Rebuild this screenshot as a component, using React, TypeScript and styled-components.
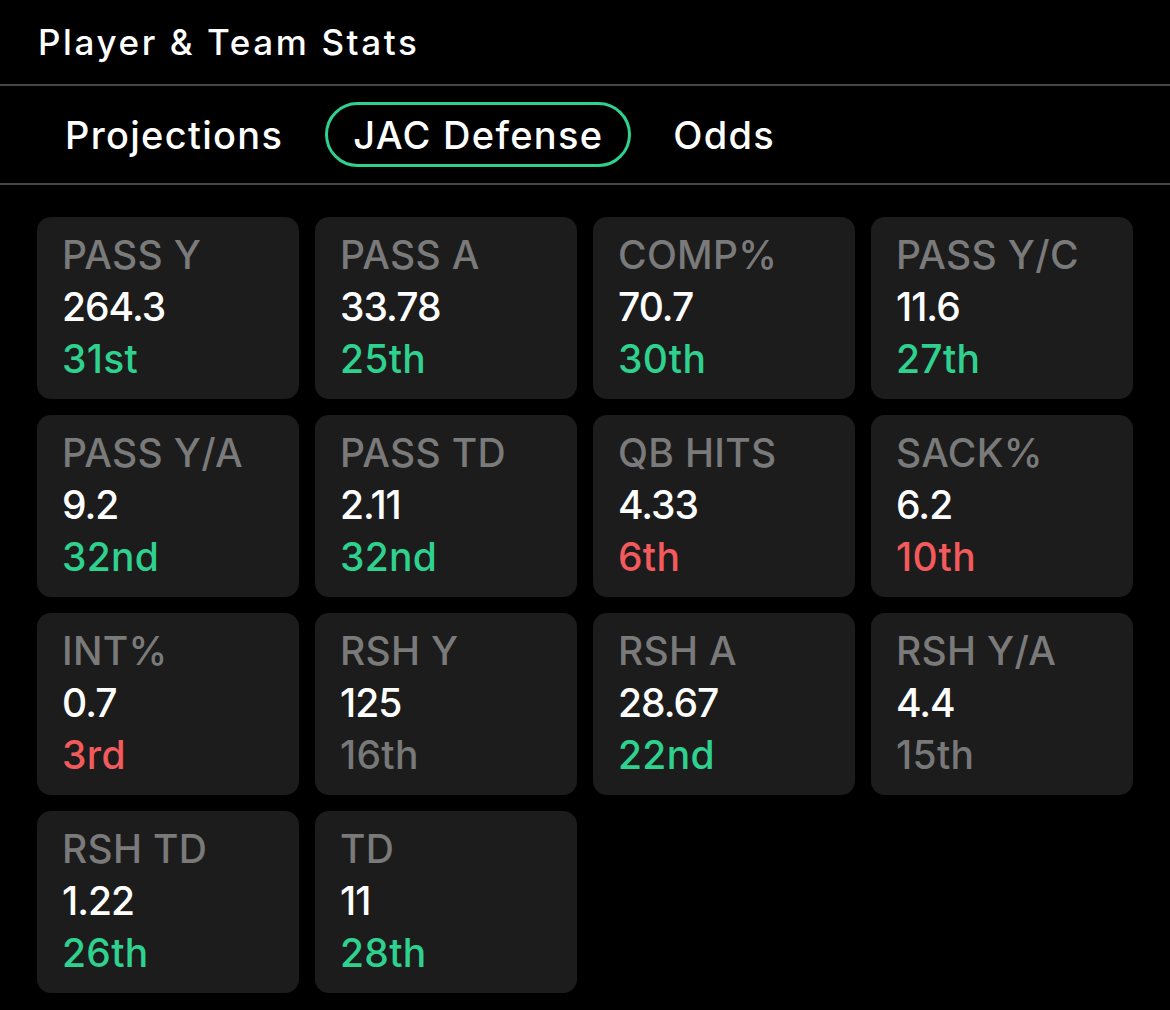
import styled, { createGlobalStyle } from "styled-components";

// page wide reset
const GlobalStyle = createGlobalStyle`
  html, body {
    margin: 0;
    padding: 0;
    background: #000;
  }
  body {
    font-family: Inter, "Noto Sans", "Liberation Sans", sans-serif;
    color: #fff;
  }
`;

type Tone = "good" | "bad" | "neutral";

type Stat = {
  label: string;
  value: string;
  rank: string;
  tone: Tone;
};

const stats: Stat[] = [
  { label: "PASS Y", value: "264.3", rank: "31st", tone: "good" },
  { label: "PASS A", value: "33.78", rank: "25th", tone: "good" },
  { label: "COMP%", value: "70.7", rank: "30th", tone: "good" },
  { label: "PASS Y/C", value: "11.6", rank: "27th", tone: "good" },
  { label: "PASS Y/A", value: "9.2", rank: "32nd", tone: "good" },
  { label: "PASS TD", value: "2.11", rank: "32nd", tone: "good" },
  { label: "QB HITS", value: "4.33", rank: "6th", tone: "bad" },
  { label: "SACK%", value: "6.2", rank: "10th", tone: "bad" },
  { label: "INT%", value: "0.7", rank: "3rd", tone: "bad" },
  { label: "RSH Y", value: "125", rank: "16th", tone: "neutral" },
  { label: "RSH A", value: "28.67", rank: "22nd", tone: "good" },
  { label: "RSH Y/A", value: "4.4", rank: "15th", tone: "neutral" },
  { label: "RSH TD", value: "1.22", rank: "26th", tone: "good" },
  { label: "TD", value: "11", rank: "28th", tone: "good" },
];

const toneColors: Record<Tone, string> = {
  good: "#2fd18f",
  bad: "#f25a5c",
  neutral: "#787878",
};

const tabs = ["Projections", "JAC Defense", "Odds"];

// outer panel
const Panel = styled.div`
  width: 1170px;
  min-height: 1010px;
  background: #000;
`;

// top title bar
const TitleBar = styled.div`
  height: 84px;
  display: flex;
  align-items: center;
  padding: 0 38px;
  font-size: 35px;
  font-weight: 500;
  letter-spacing: 2.6px;
  border-bottom: 2px solid #464646;
`;

// tab strip between the two dividers
const TabStrip = styled.div`
  height: 97px;
  display: flex;
  align-items: center;
  gap: 14px;
  padding: 0 37px;
  border-bottom: 2px solid #464646;
`;

const Tab = styled.div<{ $active?: boolean }>`
  height: 65px;
  box-sizing: border-box;
  display: flex;
  align-items: center;
  padding: 0 25px;
  border-radius: 33px;
  border: 3.5px solid ${(p) => (p.$active ? "#2fd18f" : "transparent")};
  font-size: 38px;
  font-weight: 500;
  letter-spacing: 1.3px;
  color: #fff;
`;

// stats grid
const Grid = styled.div`
  display: grid;
  grid-template-columns: repeat(4, 262px);
  grid-auto-rows: 182px;
  gap: 16px;
  padding: 32px 37px 18px;
`;

const Card = styled.div`
  background: #1c1c1c;
  border-radius: 14px;
  padding: 12px 25px 0;
  display: flex;
  flex-direction: column;
`;

const Line = styled.div<{ $color: string; $tight?: boolean }>`
  font-size: 39px;
  line-height: 52px;
  font-weight: 500;
  letter-spacing: ${(p) => (p.$tight ? "-1px" : "0.3px")};
  color: ${(p) => p.$color};
  white-space: nowrap;
`;

const StatCard = ({ stat }: { stat: Stat }) => (
  <Card>
    <Line $color="#7a7a7a">{stat.label}</Line>
    <Line $color="#ffffff" $tight>
      {stat.value}
    </Line>
    <Line $color={toneColors[stat.tone]}>{stat.rank}</Line>
  </Card>
);

const App = () => {
  return (
    <Panel>
      <GlobalStyle />
      <TitleBar>Player &amp; Team Stats</TitleBar>
      <TabStrip>
        {tabs.map((t) => (
          <Tab key={t} $active={t === "JAC Defense"}>
            {t}
          </Tab>
        ))}
      </TabStrip>
      <Grid>
        {stats.map((s) => (
          <StatCard key={s.label} stat={s} />
        ))}
      </Grid>
    </Panel>
  );
};

export default App;
